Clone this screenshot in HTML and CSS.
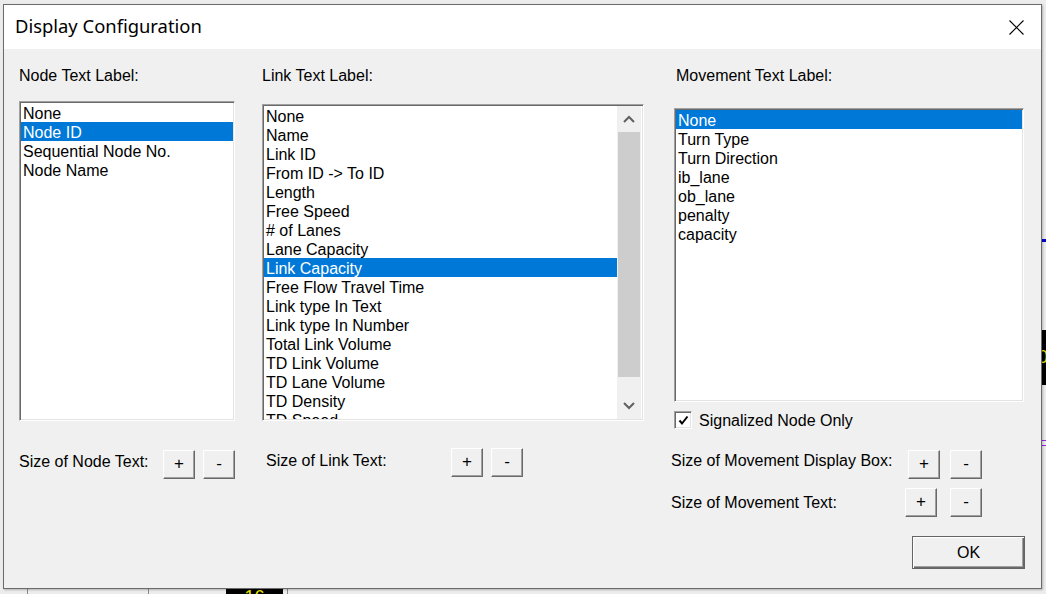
FILE: index.html
```html
<!DOCTYPE html>
<html>
<head>
<meta charset="utf-8">
<link rel="stylesheet" href="styles.css">
</head>
<body>
<div class="desktop">
  <div class="bg-line bg-line-a"></div>
  <div class="bg-line bg-line-b"></div>
  <div class="bg-line bg-line-c"></div>
  <div class="bg-tag bg-tag-bottom">16</div>
  <div class="bg-tag bg-tag-right">0</div>
  <div class="bg-purple bg-purple-a"></div>
  <div class="bg-purple bg-purple-b"></div>
  <div class="bg-blue"></div>

  <div class="dialog">
    <div class="titlebar">
      <span class="title">Display Configuration</span>
      <svg class="close" width="15" height="15" viewBox="0 0 15 15">
        <path d="M0.5 0.5 L14.5 14.5 M14.5 0.5 L0.5 14.5" stroke="#000" stroke-width="1.1" fill="none"/>
      </svg>
    </div>
    <div class="content">
      <div class="col col-node">
        <div class="label">Node Text Label:</div>
        <div class="listbox list-node">
          <div class="items">
            <div class="item">None</div>
            <div class="item selected">Node ID</div>
            <div class="item">Sequential Node No.</div>
            <div class="item">Node Name</div>
          </div>
        </div>
        <div class="size-row row-node">
          <span class="size-label w-node">Size of Node Text:</span>
          <button class="btn">+</button>
          <button class="btn">-</button>
        </div>
      </div>

      <div class="col col-link">
        <div class="label">Link Text Label:</div>
        <div class="listbox list-link">
          <div class="items">
            <div class="item">None</div>
            <div class="item">Name</div>
            <div class="item">Link ID</div>
            <div class="item">From ID -&gt; To ID</div>
            <div class="item">Length</div>
            <div class="item">Free Speed</div>
            <div class="item"># of Lanes</div>
            <div class="item">Lane Capacity</div>
            <div class="item selected">Link Capacity</div>
            <div class="item">Free Flow Travel Time</div>
            <div class="item">Link type In Text</div>
            <div class="item">Link type In Number</div>
            <div class="item">Total Link Volume</div>
            <div class="item">TD Link Volume</div>
            <div class="item">TD Lane Volume</div>
            <div class="item">TD Density</div>
            <div class="item">TD Speed</div>
          </div>
          <div class="scrollbar">
            <div class="sb-btn">
              <svg width="12" height="8" viewBox="0 0 12 8"><path d="M1 7 L6 2 L11 7" stroke="#606060" stroke-width="2" fill="none"/></svg>
            </div>
            <div class="sb-thumb"></div>
            <div class="sb-track"></div>
            <div class="sb-btn">
              <svg width="12" height="8" viewBox="0 0 12 8"><path d="M1 1 L6 6 L11 1" stroke="#606060" stroke-width="2" fill="none"/></svg>
            </div>
          </div>
        </div>
        <div class="size-row row-link">
          <span class="size-label w-link">Size of Link Text:</span>
          <button class="btn">+</button>
          <button class="btn">-</button>
        </div>
      </div>

      <div class="col col-move">
        <div class="label label-move">Movement Text Label:</div>
        <div class="listbox list-move">
          <div class="items">
            <div class="item selected">None</div>
            <div class="item">Turn Type</div>
            <div class="item">Turn Direction</div>
            <div class="item">ib_lane</div>
            <div class="item">ob_lane</div>
            <div class="item">penalty</div>
            <div class="item">capacity</div>
          </div>
        </div>
        <div class="check-row">
          <span class="checkbox">
            <svg width="13" height="13" viewBox="0 0 13 13"><path d="M2.5 6.5 L5 9.5 L10.5 2.5" stroke="#000" stroke-width="2" fill="none"/></svg>
          </span>
          <span class="check-label">Signalized Node Only</span>
        </div>
        <div class="size-row row-move1">
          <span class="size-label w-move1">Size of Movement Display Box:</span>
          <button class="btn">+</button>
          <button class="btn btn-gap10">-</button>
        </div>
        <div class="size-row row-move2">
          <span class="size-label w-move2">Size of Movement Text:</span>
          <button class="btn">+</button>
          <button class="btn btn-gap13">-</button>
        </div>
        <div class="ok-row">
          <button class="btn-ok">OK</button>
        </div>
      </div>
    </div>
  </div>
</div>
</body>
</html>
```

FILE: styles.css
```css
* { box-sizing: border-box; }
html, body { margin: 0; padding: 0; }
body {
  width: 1046px;
  height: 594px;
  overflow: hidden;
  font-family: "Liberation Sans", Arial, sans-serif;
  font-size: 16px;
  color: #000;
}
.desktop {
  position: relative;
  width: 1046px;
  height: 594px;
  background: #ececec;
  overflow: hidden;
}
.bg-line { position: absolute; background: #8a8a8a; }
.bg-line-a { left: 27px; top: 586px; width: 1px; height: 8px; }
.bg-line-b { left: 148px; top: 586px; width: 1px; height: 8px; }
.bg-line-c { left: 287px; top: 586px; width: 1px; height: 8px; }
.bg-tag {
  position: absolute;
  background: #000;
  color: #e8e800;
  font-size: 18px;
  line-height: 18px;
  overflow: hidden;
}
.bg-tag-bottom { left: 226px; top: 587px; width: 57px; height: 7px; text-align: center; padding-top: 1px; }
.bg-tag-right { left: 1038px; top: 330px; width: 8px; height: 55px; padding-top: 18px; }
.bg-purple { position: absolute; background: #a020f0; height: 1px; left: 1040px; width: 6px; }
.bg-purple-a { top: 440px; }
.bg-purple-b { top: 445px; }
.bg-blue { position: absolute; left: 1040px; top: 239px; width: 6px; height: 3px; background: #0000d0; }

.dialog {
  position: absolute;
  left: 3px;
  top: 4px;
  width: 1039px;
  height: 585px;
  background: #f0f0f0;
  border: 1px solid #6b6b6b;
  box-shadow: 1px 1px 2px rgba(0,0,0,0.25);
  display: flex;
  flex-direction: column;
}
.titlebar {
  height: 44px;
  background: #fff;
  display: flex;
  align-items: center;
  justify-content: space-between;
  padding-left: 11px;
  padding-right: 17px;
  flex: none;
}
.title {
  font-family: "Noto Sans", "Open Sans", sans-serif;
  font-size: 18.4px;
  color: #000;
  padding-bottom: 3px;
}
.close { display: block; margin-top: 1px; }

.content {
  flex: 1;
  display: grid;
  grid-template-columns: 216px 382px 353px;
  column-gap: 27px;
  padding-left: 15px;
  padding-top: 17px;
  align-items: start;
}
.col { display: flex; flex-direction: column; }
.label { line-height: 19px; height: 19px; white-space: nowrap; }
.label-move { padding-left: 5px; }

.listbox {
  background: #fff;
  border-top: 1px solid #a0a0a0;
  border-left: 1px solid #a0a0a0;
  border-right: 1px solid #fff;
  border-bottom: 1px solid #fff;
  box-shadow: inset 1px 1px 0 #696969, inset -1px -1px 0 #e3e3e3;
  padding: 1px;
  overflow: hidden;
  display: flex;
}
.items { flex: 1; overflow: hidden; }
.item {
  height: 19px;
  line-height: 17px;
  padding-top: 2px;
  padding-left: 2px;
  white-space: nowrap;
}
.item.selected { background: #0078d7; color: #fff; }

.list-node { margin-top: 16px; height: 320px; }
.list-link { margin-top: 19px; height: 317px; padding-right: 2px; }
.list-move { margin-top: 23px; height: 294px; width: 350px; margin-left: 3px; }

.scrollbar {
  width: 24px;
  flex: none;
  background: #f0f0f0;
  display: flex;
  flex-direction: column;
}
.sb-btn {
  height: 26px;
  display: flex;
  align-items: center;
  justify-content: center;
  flex: none;
}
.sb-btn svg { display: block; }
.sb-thumb { height: 245px; background: #cdcdcd; flex: none; margin: 0 1px; }
.sb-track { flex: 1; }

.size-row { display: flex; align-items: flex-start; height: 29px; }
.size-label { line-height: 19px; white-space: nowrap; flex: none; }
.row-node { margin-top: 29px; }
.row-node .size-label { padding-top: 2px; }
.w-node { width: 144px; }
.row-link { margin-top: 27px; padding-left: 4px; }
.row-link .size-label { padding-top: 3px; }
.w-link { width: 185px; }
.row-move1 { margin-top: 21px; }
.row-move1 .size-label { padding-top: 1px; }
.w-move1 { width: 237px; }
.row-move2 { margin-top: 9px; }
.row-move2 .size-label { padding-top: 5px; }
.w-move2 { width: 234px; }

.btn {
  width: 32px;
  height: 29px;
  margin: 0;
  padding: 0 0 2px 0;
  font-family: "Liberation Sans", Arial, sans-serif;
  font-size: 17px;
  color: #000;
  background: #f0f0f0;
  border-top: 1px solid #fff;
  border-left: 1px solid #fff;
  border-right: 1px solid #696969;
  border-bottom: 1px solid #696969;
  box-shadow: inset -1px -1px 0 #a0a0a0;
}
.btn + .btn { margin-left: 8px; }
.btn + .btn.btn-gap10 { margin-left: 10px; }
.btn + .btn.btn-gap13 { margin-left: 13px; }

.check-row { display: flex; align-items: center; margin-top: 9px; margin-left: 3px; height: 18px; }
.checkbox {
  width: 18px;
  height: 18px;
  background: #fff;
  border-top: 1px solid #a0a0a0;
  border-left: 1px solid #a0a0a0;
  border-right: 1px solid #fff;
  border-bottom: 1px solid #fff;
  box-shadow: inset 1px 1px 0 #696969, inset -1px -1px 0 #e3e3e3;
  display: flex;
  align-items: center;
  justify-content: center;
  flex: none;
}
.checkbox svg { display: block; }
.check-label { margin-left: 7px; line-height: 19px; }

.ok-row { display: flex; justify-content: flex-end; margin-top: 19px; }
.btn-ok {
  width: 113px;
  height: 33px;
  margin: 0 -1px 0 0;
  padding: 0;
  font-family: "Liberation Sans", Arial, sans-serif;
  font-size: 16px;
  color: #000;
  background: #f0f0f0;
  border: 1px solid #646464;
  box-shadow: inset 1px 1px 0 #fff, inset -1px -1px 0 #696969, inset -2px -2px 0 #a0a0a0;
}
```
